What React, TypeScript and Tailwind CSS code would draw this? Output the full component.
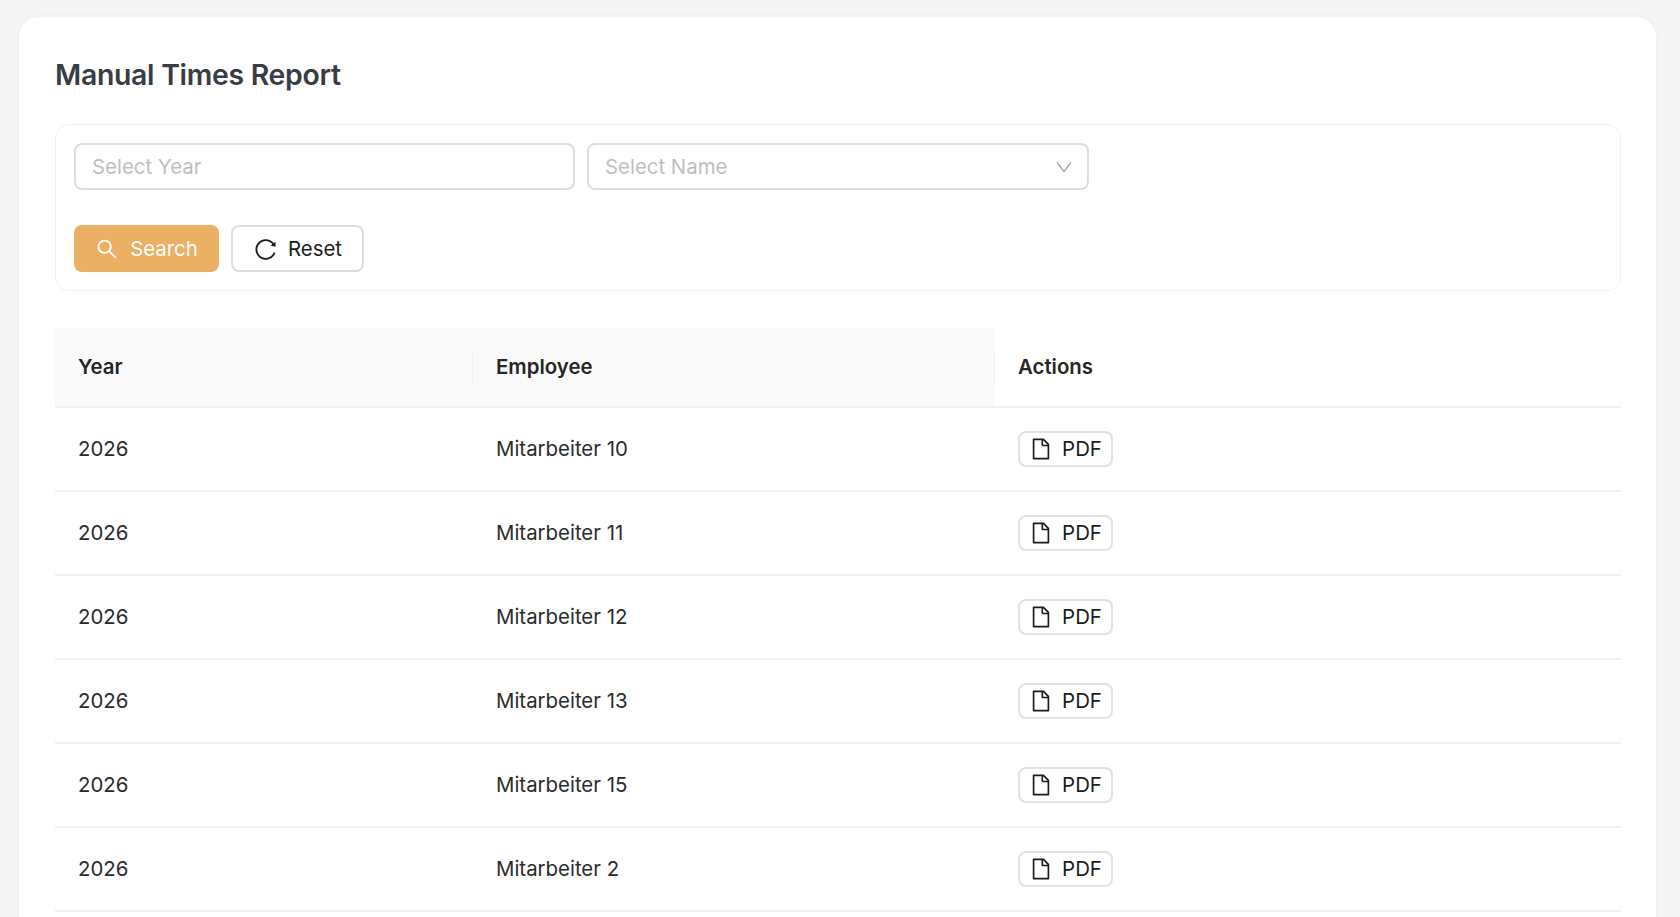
import { AiOutlineFile, AiOutlineReload, AiOutlineSearch } from 'react-icons/ai'

const rows = ['Mitarbeiter 10', 'Mitarbeiter 11', 'Mitarbeiter 12', 'Mitarbeiter 13', 'Mitarbeiter 15', 'Mitarbeiter 2']

function HeaderCell({ children, divider, shaded }: { children: string; divider?: boolean; shaded?: boolean }) {
  return (
    <div className={`relative flex items-center px-[23px] font-semibold text-[#262626] ${shaded ? 'bg-[#fafafa]' : ''}`}>
      {children}
      {divider && <span className="absolute right-0 top-[25px] h-[30px] w-px bg-[#f0f0f0]" />}
    </div>
  )
}

export default function App() {
  return (
    <div className="h-[917px] overflow-hidden bg-[#f5f5f5] pl-[19px] pr-[24px] pt-[17px] font-['Inter',sans-serif] text-[20.4px]">
      <div className="h-[1000px] rounded-t-[20px] bg-white pl-[36px] pr-[35px] pt-[38px] shadow-[0_0_6px_rgba(0,0,0,0.04)]">
        <h1 className="text-[28.4px] font-semibold leading-[40px] tracking-[-0.01em] text-[#383c44]">Manual Times Report</h1>

        {/* Filters */}
        <div className="mt-[29px] h-[167px] rounded-[14px] border border-[#f0f0f0] pl-[18px] pr-[17px] pt-[18px]">
          <div className="flex gap-3">
            <div className="flex h-[47px] w-[501px] items-center rounded-[8px] border-2 border-[#dedede] pl-[16px] pr-[16px] pt-px text-[#bfbfbf]">
              Select Year
            </div>
            <div className="flex h-[47px] w-[502px] items-center justify-between rounded-[8px] border-2 border-[#dedede] px-[16px] pt-px text-[#bfbfbf]">
              Select Name
              <svg width="18" height="12" viewBox="0 0 18 12" fill="none" stroke="#a8a8a8" strokeWidth="1.4" className="-mr-[2px]">
                <path d="M2 1.5 9 10.5 16 1.5" />
              </svg>
            </div>
          </div>
          <div className="mt-[35px] flex gap-3">
            <button className="flex h-[47px] w-[145px] items-center justify-center gap-[11px] rounded-[8px] bg-[#ebb064] pt-px text-white">
              <AiOutlineSearch className="size-[24px]" />
              Search
            </button>
            <button className="flex h-[47px] w-[133px] items-center justify-center gap-[10px] rounded-[8px] border-2 border-[#dedede] bg-white pt-px text-[#1c1c1c]">
              <AiOutlineReload className="size-[25px]" />
              Reset
            </button>
          </div>
        </div>

        {/* Table */}
        <div className="mt-[37px]">
          <div className="grid h-[80px] grid-cols-[418px_522px_1fr] border-b-2 border-[#f0f0f0]">
            <HeaderCell shaded divider>Year</HeaderCell>
            <HeaderCell shaded divider>Employee</HeaderCell>
            <HeaderCell>Actions</HeaderCell>
          </div>
          {rows.map((name) => (
            <div key={name} className="grid h-[84px] grid-cols-[418px_522px_1fr] items-center border-b-2 border-[#f0f0f0] text-[#2b2b2b]">
              <div className="px-[23px]">2026</div>
              <div className="px-[23px]">{name}</div>
              <div className="px-[23px]">
                <button className="flex h-[36px] w-[95px] items-center justify-center gap-[9px] rounded-[8px] border-2 border-[#e2e2e2] bg-white text-[#1c1c1c]">
                  <AiOutlineFile className="size-[24px]" />
                  PDF
                </button>
              </div>
            </div>
          ))}
        </div>
      </div>
    </div>
  )
}
